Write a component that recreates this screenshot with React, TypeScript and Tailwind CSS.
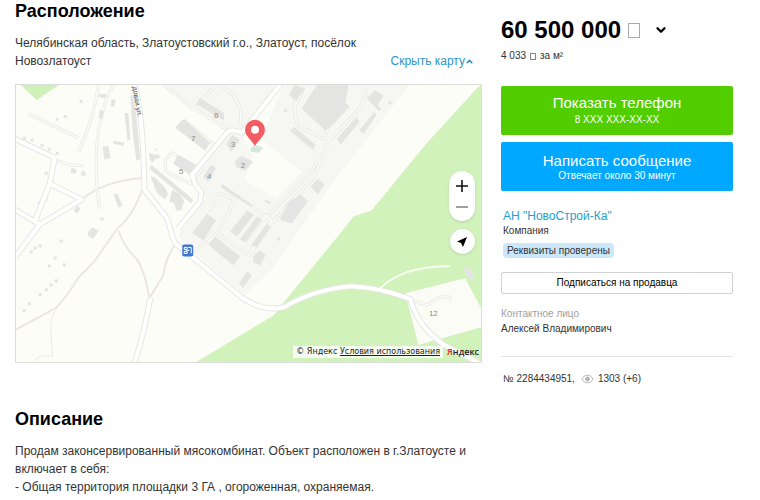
import { ChevronDown, ChevronUp } from 'lucide-react';

const buildings = [
  'M130 96l3-1 3 22 4 42-4 2-4-30z',
  'M124 113l4 0 2 27-3 1z',
  'M113 141l11 2-1 3-10-2z',
  'M102 147l6-1 2 12-6 2z',
  'M113 195l4-1 5 12-4 2z',
  'M98 94l8 0-1 4-7-1z',
  'M111 99l4 1-1 7-4-1z',
  'M99 110l5 1-2 8-4-1z',
  'M149 153l5 2 4-1 2 4-5 1-3 4-3-4z M154 150l4-2-3 4z',
  'M180 122l4-3 26 24-5 8-30-23z',
  'M200 98l24 15 0 8-28-17z',
  'M178 155l19 11-6 10-18-12z',
  'M226 144l6-9 8 5-9 12z',
  'M235 161l7-5 11 6-8 9-9-4z',
  'M203 177l8-12 5 3-8 14z',
  'M150 177l4 0 10 10 4 7-3 6-8-6z',
  'M172 190l8 5 4 7-3 9-5 0-2-7-5-2z',
  'M151 165l42 35-2 4-42-35z',
  'M222 184l31 22-1 2-31-20z',
  'M192 233l15-19 9 7-13 20z',
  'M230 232l17-21 7 4-17 22z',
  'M240 240l17-23 5 3-17 23z',
  'M251 246l16-22 4 3-14 21z',
  'M208 245l7-8 25 20-7 9z',
  'M253 257l7-6 6 4-6 11-7-3z',
  'M239 284l8-12 5 4-9 13z',
  'M280 220l8-17 13-8 7 7-16 22-7-2z',
  'M311 187l7-8 7 6-7 10z',
  'M266 200l5 3-1 2-5-3z',
  'M290 131l4-4 22 18-3 5z',
  'M289 95l6-10 10 4-9 12z',
  'M318 84l31 0-3 19 4 4-18 19-6 5-24-22 8-13z',
  'M337 139l20-22 3 5-19 23z',
  'M360 130l15-18 2 3-13 19z',
  'M367 98l9-8 8 6-6 9 4 4-3 2z',
  'M464 268l5 0 6 9-2 5-5-5z',
  'M87 233l5-5 6 3-5 8-5-2z',
  'M73 211l4-5 3 4-4 4z',
  'M71 168l5 2-1 4-5-1z M81 171l4 1 0 5-5-2z',
];

const dots = [
  [79, 100], [63, 115], [55, 118], [22, 137], [30, 139], [40, 144], [47, 148], [55, 152],
  [44, 172], [37, 202], [44, 198], [33, 247], [29, 251], [38, 245], [53, 257], [47, 265],
  [62, 264], [59, 240], [54, 280], [49, 284], [44, 289], [38, 294], [27, 303], [22, 310],
  [100, 218], [277, 238], [389, 101], [284, 109],
];

const houses: [string, number, number][] = [
  ['6', 216, 118], ['7', 193, 141], ['3', 233, 147], ['2', 243, 168],
  ['5', 181, 174], ['4', 209, 179], ['12', 434, 317],
];

const minorRoads = [
  'M28 114L78 138 M98 84Q93 120 78 152 M113 84Q88 130 99 209',
  'M53 160L68 165 83 166',
  'M163 84l30 26 8-10 17-16 M193 107L229 132',
  'M217 84Q246 98 240 126',
  'M183 120l34 27 M165 161l6-8 31 17-12 14-25-12z',
  'M209 212l10-18 15 6-6 15-12 18 M215 232l34 24 24-34-18-13',
  'M196 252l18-21 M250 253l21-31-6-7-20 28',
  'M297 125l27 14 5-12 M296 84q-3 20 1 40 M306 84l-12 25',
  'M365 84q4 12-7 27l-29 30-15 37-24 25-20 23',
  'M320 160l-13 17-45 45',
  'M434 301l-6 5-14-4 M428 306q11-9 20-9l4 3',
];

const mainRoads = [
  'M14 139L54 158 M54 158L49 184 34 222 M49 184L81 200 39 225 14 258',
  'M14 210L39 225',
  'M134 84Q143 116 144 190 L167 219 174 243',
  'M281 84L242 133 Q230 128 226 134L192 175 195 185 201 192 200 202 178 229',
  'M150 299Q143 338 134 364',
  'M174 243L243 299Q264 313 284 308Q315 290 351 287Q380 288 411 300Q418 327 445 346L482 365',
];

function MapDrawing() {
  return (
    <svg
      viewBox="15 85 467 278"
      preserveAspectRatio="xMidYMid slice"
      className="block h-full w-full"
      role="img"
      aria-label="Карта"
    >
      <rect x="15" y="85" width="467" height="278" fill="#fcfdf6" />
      <path
        d="M163 85L228 132 190 180 206 198 178 236 190 250 245 296 272 270 335 180 410 85z"
        fill="#f6f6f3"
      />
      <path d="M283 85L240 131 253 158 244 180 276 199 302 172 262 140z" fill="#fcfdf6" />
      {/* forest */}
      <path d="M20 85H58L36 100z" fill="#d0f0ba" />
      <path
        d="M482 85L478 88 426 145 372 211 354 217 338 237 284 303 274 316 196 363H482z"
        fill="#d2f2bc"
      />
      <path d="M406 294L466 279 482 309V328L419 346z" fill="#fbfcf5" />

      {/* dirt tracks */}
      <g fill="none" stroke="#ebe7e0" strokeWidth="2" strokeLinejoin="round">
        <path d="M14 331L55 309Q66 298 78 278L93 263 117 229Q130 219 139 197L143 188" />
        <path d="M81 200Q103 181 144 178 M118 231Q124 248 134 257Q144 268 149 299 M174 246Q165 260 163 276L149 299" />
        <path d="M60 303Q48 320 50 330L52 358Q40 354 33 362" stroke="#ecebe6" strokeWidth="1" />
      </g>

      {/* streets: outline below, white on top */}
      <g fill="none" strokeLinejoin="round">
        {minorRoads.map((d) => (
          <path key={d} d={d} stroke="#e2e2df" strokeWidth="3" />
        ))}
        {minorRoads.map((d) => (
          <path key={d} d={d} stroke="#f9f9f6" strokeWidth="2" />
        ))}
      </g>

      {/* buildings */}
      <g fill="#e4e4e2">
        {buildings.map((d) => (
          <path key={d} d={d} />
        ))}
        {dots.map(([x, y]) => (
          <rect key={`${x}-${y}`} x={x} y={y} width="3" height="3" />
        ))}
      </g>

      <g fill="none" strokeLinejoin="round">
        {mainRoads.map((d) => (
          <path key={d} d={d} stroke="#e6e6e3" strokeWidth="6" />
        ))}
        {mainRoads.map((d) => (
          <path key={d} d={d} stroke="#ffffff" strokeWidth="4" />
        ))}
        <path d="M381 289Q389 280 407 273Q430 266 451 267" stroke="#f8fdf3" strokeWidth="2" />
      </g>

      <g fontFamily="Liberation Sans, sans-serif" fontSize="8" fill="#8b8b89" textAnchor="middle">
        {houses.map(([n, x, y]) => (
          <text key={n} x={x} y={y}>
            {n}
          </text>
        ))}
      </g>
      <text
        x="0"
        y="0"
        transform="translate(132 87) rotate(80)"
        fontFamily="Liberation Sans, sans-serif"
        fontSize="7"
        fill="#444444"
      >
        довая ул.
      </text>

      {/* bus stop */}
      <rect x="182" y="245" width="11" height="12" rx="2" fill="#3f76cf" />
      <path
        d="M184 248h3v2h-3z M184 252h3v2h-3z M188 248h3v6 M186 251h3"
        fill="none"
        stroke="#ffffff"
        strokeWidth="1"
      />

      {/* pin */}
      <path d="M250 149l5-4 8 3-4 5-8-1z" fill="#d5e8df" />
      <path d="M255 146C251 140 245 136 245 130a10 10 0 0 1 20 0C265 136 259 140 255 146z" fill="#f25c62" />
      <circle cx="255" cy="130" r="4" fill="#ffffff" />
    </svg>
  );
}

function MapBlock() {
  return (
    <div className="relative mt-3.5 h-[279px] overflow-hidden border border-[#dcdcd8]">
      <MapDrawing />
      <div className="absolute top-[86px] right-1.5 flex flex-col items-center gap-2">
        <div className="flex w-[26px] flex-col overflow-hidden rounded-full bg-white shadow-sm">
          <button type="button" aria-label="Приблизить" className="flex h-[25px] items-end justify-center pb-1">
            <svg viewBox="0 0 12 12" className="h-3 w-3" stroke="#111111" strokeWidth="1.6">
              <path d="M6 0V12M0 6H12" />
            </svg>
          </button>
          <button type="button" aria-label="Отдалить" className="flex h-[25px] items-center justify-center">
            <svg viewBox="0 0 12 12" className="h-3 w-3" stroke="#444444" strokeWidth="1.2">
              <path d="M0 4H12" />
            </svg>
          </button>
        </div>
        <button
          type="button"
          aria-label="Моё местоположение"
          className="flex h-[25px] w-[25px] items-center justify-center rounded-full bg-white shadow-sm"
        >
          <svg viewBox="0 0 12 12" className="h-3 w-3" fill="#000000">
            <path d="M11 1L1 5.5L5 7L7 11z" />
          </svg>
        </button>
      </div>
      <div className="absolute right-0 bottom-1 flex items-center gap-1 pr-0.5 font-['DejaVu_Sans',sans-serif] text-[8px] leading-3 text-[#222222]">
        <p className="bg-white/80 px-[3px] whitespace-nowrap">
          © Яндекс{' '}
          <a href="#terms" className="underline">
            Условия использования
          </a>
        </p>
        <a href="#yandex" className="font-['Open_Sans',sans-serif] text-[9px] font-semibold">
          <span className="text-[#ff1a10]">Я</span>ндекс
        </a>
      </div>
    </div>
  );
}

function Seller() {
  return (
    <aside className="w-[232px] shrink-0 pt-4 text-[10px] leading-4 text-[#333333]">
      <div className="flex items-center text-black">
        <h2 className="text-2xl leading-7 font-bold whitespace-nowrap">60 500 000</h2>
        <span className="ml-[7px] h-[15px] w-3 border border-[#aaaaaa]" />
        <button type="button" aria-label="История цены" className="ml-3.5">
          <ChevronDown size={14} strokeWidth={4} />
        </button>
      </div>
      <p className="mt-1 flex items-center gap-1">
        4 033 <span className="h-[7px] w-1.5 border border-[#888888]" /> за м²
      </p>

      <div className="mt-[22px] flex flex-col gap-[7px] text-white">
        <button type="button" className="h-[49px] rounded-xs bg-[#51cd00]">
          <span className="block text-[15px] leading-[18px]">Показать телефон</span>
          <span className="block">8 XXX XXX-XX-XX</span>
        </button>
        <button type="button" className="h-[49px] rounded-xs bg-[#00a8ff]">
          <span className="block text-[15px] leading-[18px]">Написать сообщение</span>
          <span className="block leading-3">Отвечает около 30 минут</span>
        </button>
      </div>

      <div className="mt-4 flex flex-col items-start pl-0.5">
        <a href="#seller" className="text-xs leading-[18px] text-[#1f9fce]">
          АН "НовоСтрой-Ка"
        </a>
        <p className="leading-3">Компания</p>
        <span className="mt-1.5 rounded bg-[#cbe8fb] px-1 leading-[15px]">Реквизиты проверены</span>
      </div>
      <button
        type="button"
        className="mt-3.5 h-[22px] w-full rounded-xs border border-[#d2d2d2] bg-white text-black"
      >
        Подписаться на продавца
      </button>

      <p className="mt-3 leading-[15px] text-[#a0a0a0]">Контактное лицо</p>
      <p className="leading-[15px]">Алексей Владимирович</p>

      <p className="mt-5 flex items-center border-t border-[#e6e6e6] pt-3.5 pl-0.5">
        № 2284434951,
        <svg viewBox="0 0 13 10" className="mr-1 ml-1.5 h-2.5 w-[13px]" fill="none" stroke="#b5b5b5">
          <path d="M1 5C3 0 10 0 12 5C10 10 3 10 1 5z" />
          <circle cx="6.5" cy="5" r="2" fill="#b5b5b5" />
        </svg>
        1303 (+6)
      </p>
    </aside>
  );
}

export default function App() {
  return (
    <div className="flex gap-[19px] bg-white pr-[27px] pl-[15px] font-['Liberation_Sans',Arial,sans-serif]">
      <main className="min-w-0 flex-1 text-xs leading-[18px] text-[#333333]">
        <section>
          <h1 className="text-lg leading-[22px] font-bold text-black">Расположение</h1>
          <div className="mt-3 flex items-end justify-between">
            <p className="max-w-[350px]">
              Челябинская область, Златоустовский г.о., Златоуст, посёлок Новозлатоуст
            </p>
            <button type="button" className="mr-2 flex items-center whitespace-nowrap text-[#2f94c4]">
              Скрыть карту
              <ChevronUp size={9} strokeWidth={4} />
            </button>
          </div>
          <MapBlock />
        </section>
        <section className="mt-[45px]">
          <h2 className="text-lg leading-[22px] font-bold text-black">Описание</h2>
          <p className="mt-3">
            Продам законсервированный мясокомбинат. Объект расположен в г.Златоусте и включает в себя:
            <br />- Общая территория площадки 3 ГА , огороженная, охраняемая.
          </p>
        </section>
      </main>
      <Seller />
    </div>
  );
}
